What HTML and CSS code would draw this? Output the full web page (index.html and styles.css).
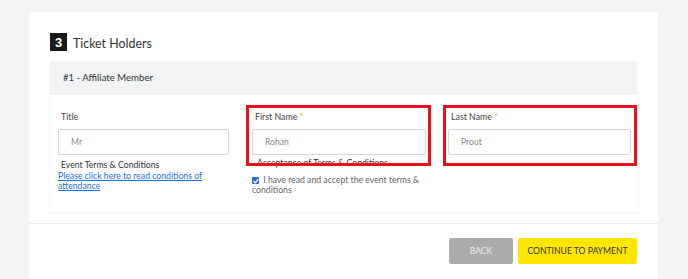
FILE: index.html
```html
<!DOCTYPE html>
<html>
<head>
<meta charset="utf-8">
<link rel="stylesheet" href="styles.css">
</head>
<body>
<div class="card">
  <div class="card-main">
    <h2 class="step"><span class="step-num">3</span><span class="step-title">Ticket Holders</span></h2>
    <div class="panel">
      <div class="panel-head">#1 - Affiliate Member</div>
      <div class="panel-body">
        <div class="col">
          <label class="lbl">Title</label>
          <div class="input">Mr</div>
          <div class="sub">Event Terms &amp; Conditions</div>
          <a class="link" href="#">Please click here to read conditions of attendance</a>
        </div>
        <div class="col">
          <label class="lbl">First Name <span class="req">*</span></label>
          <div class="input">Rohan</div>
          <div class="sub sub2">Acceptance of Terms &amp; Conditions</div>
          <div class="check"><span class="box"><svg viewBox="0 0 8 8" width="8" height="8"><path d="M1.6 4.2 L3.3 5.8 L6.4 2.2" fill="none" stroke="#fff" stroke-width="1.3"/></svg></span> I have read and accept the event terms &amp; conditions</div>
        </div>
        <div class="col">
          <label class="lbl">Last Name <span class="req">*</span></label>
          <div class="input">Prout</div>
        </div>
        <div class="mark mark-first"></div>
        <div class="mark mark-last"></div>
      </div>
    </div>
  </div>
  <div class="card-foot">
    <button class="btn btn-back">BACK</button>
    <button class="btn btn-go">CONTINUE TO PAYMENT</button>
  </div>
</div>
</body>
</html>
```
FILE: styles.css
```css
html, body {
  margin: 0;
  padding: 0;
  background: #f2f3f5;
  font-family: "Lato", "Liberation Sans", sans-serif;
  color: #3a3a3a;
}
.card {
  margin: 12px 0 0 29px;
  width: 629px;
  min-height: 267px;
  background: #fff;
}
.card-main {
  padding: 21px 21px 11px 21px;
}
.step {
  margin: 0;
  display: flex;
  align-items: center;
  height: 18px;
  font-weight: normal;
}
.step-num {
  width: 17px;
  height: 18px;
  background: #1a1a1a;
  color: #fff;
  font-size: 13px;
  font-weight: bold;
  display: flex;
  align-items: center;
  justify-content: center;
  font-family: "Liberation Sans", sans-serif;
}
.step-title {
  margin-left: 6px;
  font-size: 12.4px;
  color: #333;
  position: relative;
  top: 1px;
}
.panel {
  margin-top: 10px;
  box-shadow: 0 1px 3px rgba(0,0,0,0.06);
}
.panel-head {
  background: #f2f3f5;
  height: 34px;
  line-height: 34px;
  padding-left: 13px;
  font-size: 9.6px;
  color: #333;
}
.panel-body {
  position: relative;
  height: 117px;
  box-sizing: border-box;
  padding: 15px 5px 0 8px;
  display: grid;
  grid-template-columns: 172px 174px 183px;
  column-gap: 22px;
  align-items: start;
}
.panel-body .col:first-child { margin-right: 1px; }
.col { display: flex; flex-direction: column; }
.lbl {
  font-size: 8.8px;
  line-height: 13px;
  height: 13px;
  color: #444;
  padding-left: 3px;
}
.req { color: #f0a020; }
.input {
  margin-top: 6px;
  height: 26px;
  box-sizing: border-box;
  border: 1px solid #d6d6d6;
  border-radius: 2px;
  font-size: 8.6px;
  line-height: 24px;
  padding-left: 12px;
  color: #888;
}
.sub {
  margin-top: 4px;
  font-size: 8.7px;
  line-height: 12px;
  color: #333;
  padding-left: 3px;
}
.sub2 { margin-top: 2px; padding-left: 5px; }
.link {
  font-size: 8.7px;
  line-height: 10px;
  color: #1f6fe0;
  text-decoration: underline;
  padding-right: 20px;
}
.check {
  margin-top: 6px;
  font-size: 8.7px;
  line-height: 10px;
  color: #666;
  padding-right: 6px;
}
.box {
  display: inline-block;
  width: 7px;
  height: 7px;
  background: #2a6fd6;
  border-radius: 1px;
  vertical-align: -1px;
  margin-right: 2px;
  position: relative;
}
.box svg { position: absolute; left: -0.5px; top: -0.5px; }
.mark {
  position: absolute;
  top: 10px;
  height: 61px;
  box-sizing: border-box;
  border: 3px solid #e8121c;
  pointer-events: none;
}
.mark-first { left: 196px; width: 185px; }
.mark-last { left: 393px; width: 194px; }
.card-foot {
  border-top: 1px solid #ececec;
  padding: 14px 21px 0 0;
  display: flex;
  justify-content: flex-end;
  gap: 5px;
}
.btn {
  height: 26px;
  border: none;
  border-radius: 2px;
  font-family: "Lato", "Liberation Sans", sans-serif;
  font-size: 8.6px;
  padding: 0;
}
.btn-back {
  width: 64px;
  background: #ababab;
  color: #ececec;
}
.btn-go {
  width: 119px;
  background: #ffe500;
  color: #333;
}
```
